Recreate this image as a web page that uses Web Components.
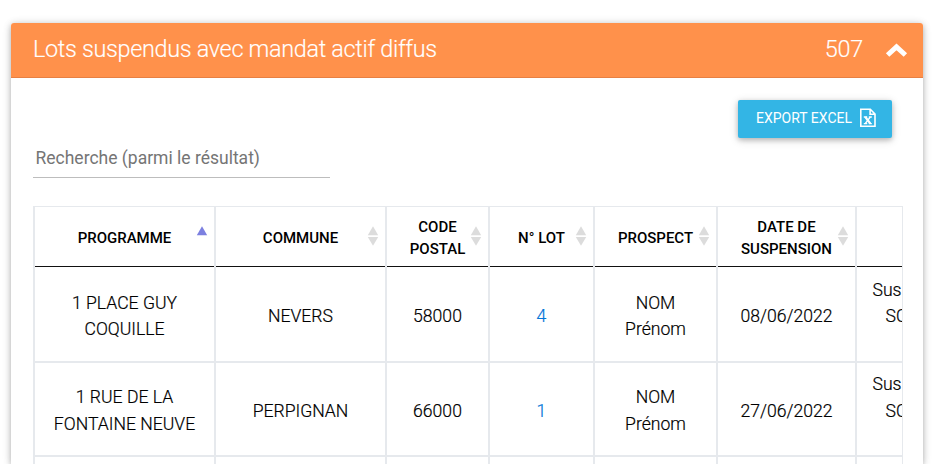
<!DOCTYPE html>
<html lang="fr"><head><meta charset="utf-8"><title>Lots suspendus</title>
<style>
html,body{margin:0;height:464px;overflow:hidden;background:#fff}
body{font-family:Roboto,"Liberation Sans",sans-serif;font-weight:300;color:#000;font-size:17.6px;line-height:26.4px}
</style></head><body>
<lot-panel label="Lots suspendus avec mandat actif diffus" count="507">
<export-button slot="action">EXPORT EXCEL</export-button>
<search-field slot="search" placeholder="Recherche (parmi le résultat)"></search-field>
<lot-table></lot-table>
</lot-panel>
<script>
const root=(el,html)=>{el.attachShadow({mode:'open'}).innerHTML=html;};

class LotPanel extends HTMLElement{connectedCallback(){root(this,`<style>
:host{display:block;padding:23px 22px 0 11px}
section{height:441px;background:#fff;border-radius:3px 3px 0 0;box-shadow:0 2px 5px rgba(0,0,0,.16),0 2px 10px rgba(0,0,0,.14),0 0 10px rgba(0,0,0,.08)}
header{box-sizing:border-box;height:55px;display:flex;align-items:center;background:#ff914b;border-bottom:1px solid #e78043;border-radius:3px 3px 0 0;color:#fff;padding:0 15px 2px 22px;line-height:30px}
.t{flex:1;font-size:23.4px;letter-spacing:-.31px}.n{font-size:23.4px;letter-spacing:-.2px}
.t,.n{-webkit-text-stroke:.15px #fff}
svg{display:block;margin-left:22px;margin-top:3px}
.body{padding:22px 20px 0 22px}
.a{display:flex;justify-content:flex-end;padding-right:11px;height:38px}
</style><section><header><span class="t">${this.getAttribute('label')}</span><span class="n">${this.getAttribute('count')}</span>
<svg width="23" height="16" viewBox="0 0 23 16"><path d="M2.6 12 11.5 3.9 20.4 12" fill="none" stroke="#fff" stroke-width="5"/></svg></header>
<div class="body"><div class="a"><slot name="action"></slot></div><slot name="search"></slot><slot></slot></div></section>`)}}

class ExportButton extends HTMLElement{connectedCallback(){root(this,`<style>
:host{box-sizing:border-box;width:154px;height:38px;display:flex;align-items:center;padding-left:18px;background:#33b5e5;color:#fff;border-radius:2px;font-size:14px;font-weight:400;line-height:20px;box-shadow:0 2px 5px rgba(0,0,0,.2),0 2px 10px rgba(0,0,0,.16);white-space:nowrap}
span{width:103px;padding-bottom:2px}svg{display:block;margin-top:-2px}
</style><span><slot></slot></span><svg width="18" height="20" viewBox="0 0 18 20" fill="none" stroke="#fff" stroke-width="1.6"><path d="M1.8 1.2H11.3L16 6V18.3H1.8V1.2ZM11.1 1.4V6.2H16"/><path d="M6.3 9 11.3 15.5" stroke-width="2.1"/><path d="M11.3 9 6.3 15.5M4.8 9H8.2M9.8 9H12.8M4.8 15.7H8.2M9.8 15.7H12.8" stroke-width="1.3"/></svg>`)}}

class SearchField extends HTMLElement{connectedCallback(){root(this,`<style>
:host{display:block;box-sizing:border-box;width:297px;height:40px;border-bottom:1px solid #bdbdbd;padding:7px 0 0 2.5px;color:#757575;font-weight:400;font-size:17.5px;margin-bottom:28px;white-space:nowrap}
</style><span>${this.getAttribute('placeholder')}</span>`)}}

class SortMark extends HTMLElement{connectedCallback(){const up=this.hasAttribute('up');root(this,`<style>
:host{position:absolute;right:6px;top:19px}svg{display:block}
</style><svg width="12" height="22" viewBox="0 0 12 22"><path d="M.8 9.2 6 .2 11.2 9.2Z" fill="${up?'#7c80e0':'#dcdcdc'}"/>${up?'':'<path d="M.8 11H11.2L6 19.8Z" fill="#dcdcdc"/>'}</svg>`)}}

class LotTable extends HTMLElement{connectedCallback(){
const heads=['PROGRAMME','COMMUNE','CODE<br>POSTAL','N° LOT','PROSPECT','DATE DE<br>SUSPENSION',''];
const rows=[['1 PLACE GUY<br>COQUILLE','NEVERS','58000','<a>4</a>','NOM<br>Prénom','08/06/2022','Sus<br><i></i>SC'],
['1 RUE DE LA<br>FONTAINE NEUVE','PERPIGNAN','66000','<a>1</a>','NOM<br>Prénom','27/06/2022','Sus<br><i></i>SC'],['','','','','','','']];
root(this,`<style>
:host{display:block;box-sizing:border-box;width:870px;height:258px;overflow:hidden;border-top:1px solid #e6e9ed;border-right:1px solid #e6e9ed}
.g{width:869px;box-sizing:border-box;display:grid;grid-template-columns:181px 171px 103px 105px 123px 139px 45px;grid-template-rows:60px 96px 94px 8px;border-left:2px solid #e6e9ed}
.c,.h{position:relative;box-sizing:border-box;display:flex;align-items:center;justify-content:center;text-align:center;white-space:nowrap;border-right:2px solid #e6e9ed}
.c{border-bottom:2px solid #e6e9ed;padding-top:4px;-webkit-text-stroke:.2px currentColor}
.c:has(br){padding-top:3px}
.c.r1{padding-top:4px}
.c.r3{border-bottom:0;padding:0}
.h{font-weight:500;font-size:15px;line-height:22px;padding:2px 0 0;background:linear-gradient(#111,#111) bottom/100% 1px no-repeat}
.c:nth-child(7n),.h:nth-child(7n){border-right:0;overflow:hidden}
.c:nth-child(7n){align-items:flex-start;justify-content:flex-start;text-align:left;line-height:27px}
.c.r1:nth-child(7n){padding-top:10px;line-height:26.4px}
.c.r2:nth-child(7n){padding-top:8px}
.c:nth-child(7n) span{padding-left:15.5px}
i{display:inline-block;width:13px}
a{color:#0275d8;-webkit-text-stroke-color:#0275d8}
</style><div class="g">${heads.map((h,i)=>`<div class="h"><span>${h}</span>${i<6?`<sort-mark ${i?'':'up'}></sort-mark>`:''}</div>`).join('')}${rows.map((r,j)=>r.map(c=>`<div class="c r${j+1}"><span>${c}</span></div>`).join('')).join('')}</div>`)}}

customElements.define('sort-mark',SortMark);
customElements.define('search-field',SearchField);
customElements.define('export-button',ExportButton);
customElements.define('lot-table',LotTable);
customElements.define('lot-panel',LotPanel);
</script></body></html>
